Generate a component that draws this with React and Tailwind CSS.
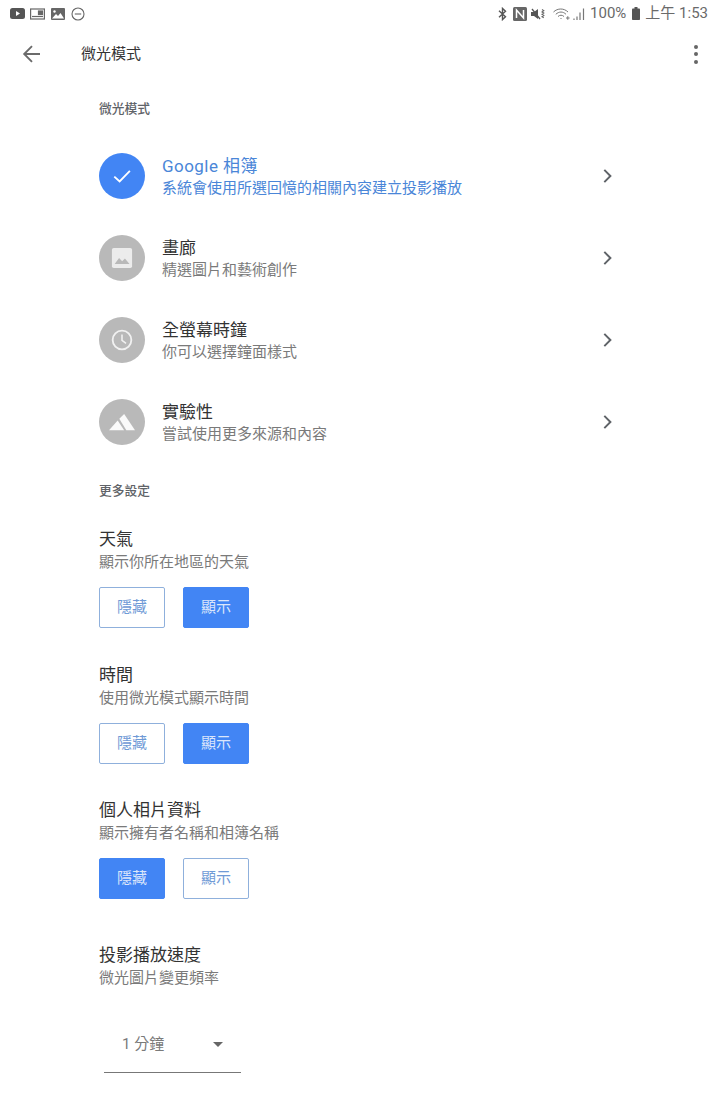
const FONT = "font-['Roboto','Noto_Sans_CJK_TC',sans-serif]";

function Chevron() {
  return (
    <svg width="24" height="24" viewBox="0 0 24 24" className="shrink-0">
      <path d="M8.6 6.6 10 5.2 16.8 12 10 18.8 8.6 17.4 14 12z" fill="#5f6368" />
    </svg>
  );
}

const icons = {
  check: <path d="M3.6 12.6 9.4 18 20.6 6.4" fill="none" stroke="#fff" strokeWidth="2" />,
  image: (
    <>
      <rect x="1" y="1" width="22" height="22" rx="2" fill="#fff" fillOpacity="0.72" />
      <path d="M4 18.5 8.8 12l3.4 3.6 3-3 5 5.9z" fill="#b9b9b9" />
    </>
  ),
  clock: (
    <>
      <circle cx="12" cy="12" r="10.2" fill="none" stroke="#fff" strokeOpacity="0.8" strokeWidth="2" />
      <path d="M12 6V12.5l4.4 3.2" fill="none" stroke="#fff" strokeOpacity="0.8" strokeWidth="1.7" />
    </>
  ),
  mountain: (
    <>
      <path d="M0 19.5 8 10.5 14 19.5z" fill="#fff" fillOpacity="0.92" />
      <path d="M9.5 9 14 4.5 24 19.5H16z" fill="#fff" fillOpacity="0.92" />
    </>
  ),
};

function Row({ icon, title, sub, active, size = 22, titleClass = "" }) {
  return (
    <div className="flex h-[82px] items-center pr-[101px]">
      <div className={`flex h-[46px] w-[46px] shrink-0 items-center justify-center rounded-full ${active ? "bg-[#4285f4]" : "bg-[#b9b9b9]"}`}>
        <svg width={size} height={size} viewBox="0 0 24 24">{icons[icon]}</svg>
      </div>
      <div className="ml-[17px] mt-[1px] flex-1">
        <div className={`h-[22px] text-[17px] leading-[23px] ${active ? "text-[#4a86d8]" : "text-[#333]"} ${titleClass}`}>{title}</div>
        <div className={`h-[22px] text-[15px] leading-[22px] ${active ? "text-[#4a86d8]" : "text-[#7a7a7a]"}`}>{sub}</div>
      </div>
      <Chevron />
    </div>
  );
}

function Toggle({ on, children }) {
  return (
    <div className={`flex h-[41px] w-[66px] items-center justify-center rounded-[2px] border text-[15px] ${on ? "border-[#4285f4] bg-[#4285f4] text-[#dbe6fb]" : "border-[#8fb0dc] bg-white text-[#6f9ad6]"}`}>
      {children}
    </div>
  );
}

function Setting({ title, sub, hideOn, className }) {
  return (
    <div className={className}>
      <div className="h-[23px] text-[17px] leading-[23px] text-[#333]">{title}</div>
      <div className="h-[22px] text-[15px] leading-[22px] text-[#7a7a7a]">{sub}</div>
      <div className="mt-[14px] flex gap-[18px]">
        <Toggle on={hideOn}>隱藏</Toggle>
        <Toggle on={!hideOn}>顯示</Toggle>
      </div>
    </div>
  );
}

function StatusBar() {
  return (
    <div className="flex h-[27px] items-center justify-between pl-[10px] pr-[12px] text-[#6a6a6a]">
      <div className="flex items-center gap-[5px]">
        <svg width="15" height="11" viewBox="0 0 15 11">
          <rect width="15" height="11" rx="2.5" fill="#555" />
          <path d="M6 3v5l4-2.5z" fill="#fff" />
        </svg>
        <svg width="15" height="12" viewBox="0 0 15 12" fill="none" stroke="#666" strokeWidth="1.2">
          <rect x="0.6" y="1" width="13.8" height="10" />
          <rect x="8.5" y="3" width="4" height="3.5" fill="#666" />
          <path d="M2 8.5h11" />
        </svg>
        <svg width="14" height="12" viewBox="0 0 14 12" className="ml-[1px]">
          <rect width="14" height="12" rx="1" fill="#666" />
          <circle cx="3.5" cy="3.5" r="1.2" fill="#fff" />
          <path d="M1 10.5 5 6l2 2 2.5-3 3.5 5.5z" fill="#fff" />
        </svg>
        <svg width="14" height="14" viewBox="0 0 14 14" fill="none" stroke="#666" strokeWidth="1.1" className="ml-[1px]">
          <circle cx="7" cy="7" r="6" />
          <path d="M3.8 7h6.4" />
        </svg>
      </div>
      <div className="flex items-center">
        <svg width="9" height="14" viewBox="0 0 9 14" fill="none" stroke="#555" strokeWidth="1.4">
          <path d="M1 3.8 7.5 9.8 4.5 12.6V1.4L7.5 4.2 1 10.2" />
        </svg>
        <svg width="14" height="14" viewBox="0 0 14 14" className="ml-[6px]">
          <rect width="14" height="14" rx="1.5" fill="#666" />
          <path d="M3.5 11V3L10.5 11V3" fill="none" stroke="#fff" strokeWidth="1.5" />
        </svg>
        <svg width="17" height="14" viewBox="0 0 17 14" className="ml-[4px]">
          <path d="M0 5h3L7 2v10L3 9H0z" fill="#555" />
          <path d="M1 2 9 12" stroke="#555" strokeWidth="1.3" />
          <path d="M11 2.5l1.8 1.2-1.8 1.2 1.8 1.2-1.8 1.2 1.8 1.2-1.8 1.2 1.8 1.2" fill="none" stroke="#666" strokeWidth="1.1" />
        </svg>
        <svg width="33" height="14" viewBox="0 0 33 14" className="ml-[5px]" fill="none" stroke="#777" strokeWidth="1">
          <path d="M0.5 5C4.5 1 11 1 15 5M2.8 7.3C6 4.3 10 4.3 13 7.3M5 9.5C7 7.8 9 7.8 11 9.5" />
          <path d="M7.5 11.5h1M13 11h3.6M14.8 9.2v3.6" />
          <path d="M21 13v-1.5M24 13V9.5M27 13V5.5M30.5 13V1.5" strokeWidth="1.2" />
        </svg>
        <span className="ml-[4px] text-[15px] leading-none">100%</span>
        <svg width="8" height="13" viewBox="0 0 8 13" className="ml-[6px]">
          <rect x="2.5" width="3" height="2" fill="#555" />
          <rect y="1.5" width="8" height="11.5" rx="0.8" fill="#555" />
        </svg>
        <span className="ml-[5px] text-[15px] leading-none">上午 1:53</span>
      </div>
    </div>
  );
}

export default function App() {
  return (
    <div className={`h-[1118px] w-[720px] overflow-hidden bg-white ${FONT}`}>
      <StatusBar />
      <div className="flex h-[54px] items-center">
        <svg width="24" height="24" viewBox="0 0 24 24" className="ml-[20px]">
          <path d="M20 12H4.8M12 4.2 4.2 12l7.8 7.8" fill="none" stroke="#6b6b6b" strokeWidth="1.9" />
        </svg>
        <div className="ml-[37px] flex-1 text-[15px] text-[#333]">微光模式</div>
        <div className="mr-[22px] flex flex-col gap-[3.5px]">
          <span className="h-[4px] w-[4px] rounded-full bg-[#666]" />
          <span className="h-[4px] w-[4px] rounded-full bg-[#666]" />
          <span className="h-[4px] w-[4px] rounded-full bg-[#666]" />
        </div>
      </div>
      <div className="pl-[99px]">
        <div className="mt-[19px] h-[18px] text-[12.75px] font-medium leading-[18px] text-[#5f6368]">微光模式</div>
        <div className="mt-[17px]">
          <Row active icon="check" title="Google 相簿" sub="系統會使用所選回憶的相關內容建立投影播放" titleClass="tracking-[0.45px]" />
          <Row icon="image" title="畫廊" sub="精選圖片和藝術創作" />
          <Row icon="clock" title="全螢幕時鐘" sub="你可以選擇鐘面樣式" />
          <Row icon="mountain" title="實驗性" sub="嘗試使用更多來源和內容" size={26} />
        </div>
        <div className="mt-[19px] h-[18px] text-[12.75px] font-medium leading-[18px] text-[#5f6368]">更多設定</div>
        <Setting className="mt-[28px]" title="天氣" sub="顯示你所在地區的天氣" />
        <Setting className="mt-[36px]" title="時間" sub="使用微光模式顯示時間" />
        <Setting className="mt-[35px]" title="個人相片資料" sub="顯示擁有者名稱和相簿名稱" hideOn />
        <div className="mt-[45px] h-[23px] text-[17px] leading-[23px] text-[#333]">投影播放速度</div>
        <div className="h-[22px] text-[15px] leading-[22px] text-[#7a7a7a]">微光圖片變更頻率</div>
        <div className="ml-[5px] mt-[36px] flex h-[48px] w-[137px] items-start border-b border-[#777] pl-[18px] pt-[8px]">
          <span className="text-[15px] leading-[22px] text-[#7a7a7a]">1 分鐘</span>
          <span className="ml-[49px] mt-[9px] h-0 w-0 border-x-[5.5px] border-t-[5.5px] border-x-transparent border-t-[#666]" />
        </div>
      </div>
    </div>
  );
}
